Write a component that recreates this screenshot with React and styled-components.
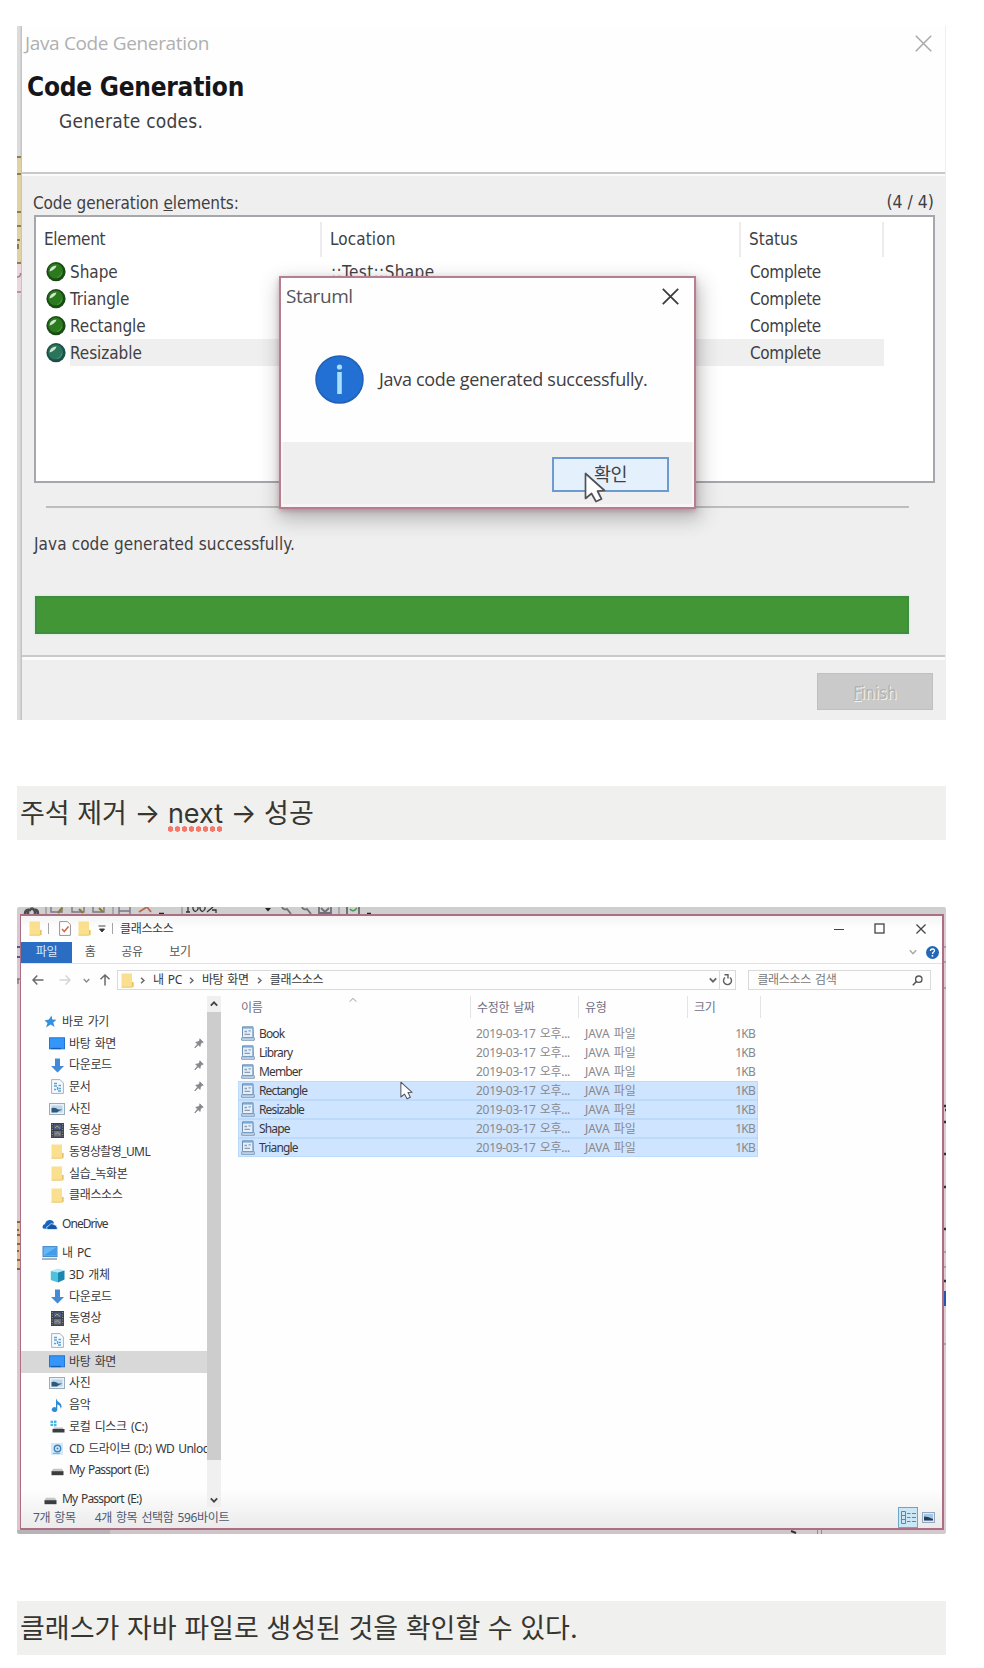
import React from "react";
import styled, { createGlobalStyle, css } from "styled-components";

const Global = createGlobalStyle`
  * { box-sizing: border-box; }
  body { margin: 0; background: #fff; }
  svg { display: block; flex: none; }
`;

const tahoma = `"DejaVu Sans Condensed", "DejaVu Sans", "Noto Sans CJK KR", sans-serif`;
const segoe = `"Open Sans", "Noto Sans", "Noto Sans CJK KR", sans-serif`;
const malgun = `"Noto Sans", "Noto Sans CJK KR", sans-serif`;

const Page = styled.main`
  width: 984px;
  height: 1668px;
  padding: 26px 38px 0 17px;
  overflow: hidden;
`;

const Label = styled.span`
  font-family: ${(p) => p.$font || tahoma};
  font-size: ${(p) => p.$size || 17}px;
  font-weight: ${(p) => p.$weight || 400};
  letter-spacing: ${(p) => p.$ls || 0}px;
  word-spacing: ${(p) => p.$ws || 0}px;
  color: ${(p) => p.$color || "#3f3f44"};
  line-height: 1;
  white-space: pre;
`;

/* ---------- Code generation wizard ---------- */

const Wizard = styled.section`
  position: relative;
  display: flex;
  width: 929px;
  height: 694px;
  overflow: hidden;
`;

const WizardBody = styled.div`
  flex: 1;
  display: flex;
  flex-direction: column;
  background: #efefef;
  border-right: 1px solid #eeeeee;
`;

const WizardHeader = styled.header`
  height: 148px;
  background: #fefefe;
  border-bottom: 2px solid #c9c9c9;
  display: flex;
  flex-direction: column;
`;

const CaptionBar = styled.div`
  height: 35px;
  padding: 0 13px 0 3px;
  display: flex;
  align-items: center;
  justify-content: space-between;
`;

const HeadTitle = styled.div`
  height: 52px;
  padding: 0 0 0 5px;
  display: flex;
  align-items: center;
`;

const HeadNote = styled.div`
  height: 16px;
  padding-left: 37px;
  display: flex;
  align-items: center;
`;

const ListCaption = styled.div`
  height: 41px;
  border-top: 2px solid #fafafa;
  padding: 15px 11px 0 11px;
  display: flex;
  align-items: center;
  justify-content: space-between;
`;

const Table = styled.div`
  height: 268px;
  margin: 0 10px 0 12px;
  border: 2px solid #a6a7ac;
  background: #fff;
  padding: 5px 0 0 0;
`;

const grid = css`
  display: grid;
  grid-template-columns: 286px 419px 143px 1fr;
`;

const TableHead = styled.div`
  ${grid}
  height: 35px;
  margin-bottom: 1px;
`;

const HeadCell = styled.div`
  display: flex;
  align-items: center;
  padding: 0 0 0 8px;
  border-right: ${(p) => (p.$last ? 0 : 2)}px solid #ececec;
`;

const TableRow = styled.div`
  ${grid}
  height: 27px;
`;

const Cell = styled.div`
  display: flex;
  align-items: center;
  padding: 1px 0 0 9px;
  background: ${(p) => (p.$on ? "#efefef" : "transparent")};
`;

const NameCell = styled(Cell)`
  padding: 0 0 0 10px;
  background: ${(p) => (p.$on ? "linear-gradient(90deg, #fff 34px, #efefef 34px)" : "transparent")};
  gap: 4px;
`;

const ElementName = styled(Label)`
  padding-top: 2px;
`;

const Rule = styled.div`
  height: 2px;
  margin: 23px 36px 0 24px;
  background: #bdbdbd;
`;

const StatusLine = styled.div`
  height: 72px;
  padding-left: 12px;
  display: flex;
  align-items: center;
`;

const Progress = styled.div`
  height: 38px;
  margin: 16px 36px 0 13px;
  background: #439635;
  border: 2px solid #3f8c44;
  box-shadow: 0 0 2px 1px #d8f0dc;
`;

const WizardFooter = styled.footer`
  margin-top: 21px;
  flex: 1;
  border-top: 2px solid #c9c9c9;
  box-shadow: inset 0 3px 0 #fbfbfb;
  padding: 16px 12px 0 0;
  display: flex;
  justify-content: flex-end;
`;

const FinishButton = styled.div`
  width: 116px;
  height: 37px;
  background: #cacaca;
  border: 1px solid #c0c0c0;
  display: flex;
  align-items: center;
  justify-content: center;
  padding-top: 3px;
  text-shadow: 1px 1px 0 #f2f2f2;
`;

const Dialog = styled.div`
  position: absolute;
  left: 262px;
  top: 250px;
  width: 417px;
  height: 233px;
  background: #fefefe;
  border: 2px solid #b67f90;
  box-shadow: 2px 8px 18px 2px rgba(60, 60, 60, 0.32), 0 2px 5px rgba(170, 90, 110, 0.4);
  display: flex;
  flex-direction: column;
`;

const DialogTitle = styled.div`
  height: 37px;
  padding: 0 15px 0 5px;
  display: flex;
  align-items: center;
  justify-content: space-between;
`;

const DialogMessage = styled.div`
  flex: 1;
  display: flex;
  align-items: center;
  gap: 15px;
  padding: 1px 0 0 34px;
`;

const DialogFooter = styled.div`
  height: 65px;
  background: #efefef;
  border: solid #fbf4f6;
  border-width: 0 2px 3px;
  display: flex;
  justify-content: flex-end;
  padding: 15px 23px 0 0;
`;

const OkButton = styled.div`
  width: 117px;
  height: 35px;
  background: #e4f0fc;
  border: 2px solid #6c9bd1;
  display: flex;
  align-items: center;
  justify-content: center;
`;

const DialogPointer = styled.div`
  position: absolute;
  left: 303px;
  top: 194px;
`;

const Cross = ({ size = 17, color, w = 1.8 }) => (
  <svg width={size} height={size} viewBox="0 0 17 17" stroke={color} strokeWidth={w} fill="none">
    <path d="M.8.8 16.2 16.2M16.2.8.8 16.2" />
  </svg>
);

const Pointer = ({ width, height }) => (
  <svg width={width} height={height} viewBox="0 0 22 31">
    <path d="M1.5 1.5V26.5L7.5 21.5 12 29.5 17.5 27 13.5 19 20.5 18.5Z" fill="#fff" stroke="#50525a" strokeWidth="1.7" strokeLinejoin="round" />
  </svg>
);

const Ball = ({ teal }) => (
  <svg width="20" height="20" viewBox="0 0 20 20">
    <circle cx="10" cy="9.700" r="9.6" fill={teal ? "#1d4f49" : "#1c4a17"} />
    <circle cx="9.6" cy="9" r="7.4" fill={teal ? "#2b745c" : "#2b7a1d"} />
    <path d="M3.500 9.500Q4 4 10.500 3.500 9.500 7.500 3.500 9.500Z" fill="#cfe8cf" />
    <path d="M11 15.5Q15 14.5 15.8 10.5" stroke={teal ? "#4c9180" : "#479a38"} strokeWidth="1.2" fill="none" />
  </svg>
);

const WizardEdge = () => (
  <svg width="5" height="694" viewBox="0 0 5 694">
    <rect width="5" height="694" fill="#dcdcdc" />
    <rect x="3.5" width="1.5" height="694" fill="#c4c4c6" />
    <rect y="130" width="4" height="106" fill="#dfd3a4" />
    <rect y="237" width="4" height="32" fill="#ead7dc" />
    <g fill="#8b7c5c">
      <rect y="130" width="4" height="2" />
      <rect y="147" width="4" height="2" />
      <rect y="185" width="4" height="2" />
      <rect y="199" width="4" height="2" />
      <rect y="213" width="3" height="2" />
      <rect y="218" width="2" height="5" />
      <rect y="236" width="4" height="2" />
    </g>
    <path d="M0 251Q4 251 3.500 247M0 266H4" stroke="#a5808c" strokeWidth="1.5" fill="none" />
  </svg>
);

const elements = [
  { name: "Shape", location: "::Test::Shape" },
  { name: "Triangle" },
  { name: "Rectangle" },
  { name: "Resizable", selected: true },
];

const CodeWizard = () => (
  <Wizard>
    <WizardEdge />
    <WizardBody>
      <WizardHeader>
        <CaptionBar>
          <Label $font={segoe} $size={19} $ls={-0.35} $color="#b0b0b0">Java Code Generation</Label>
          <Cross color="#a8a8a8" w={1.5} />
        </CaptionBar>
        <HeadTitle>
          <Label $size={26} $weight={700} $ls={-0.25} $color="#16161a">Code Generation</Label>
        </HeadTitle>
        <HeadNote>
          <Label $size={19} $ls={0.22}>Generate codes.</Label>
        </HeadNote>
      </WizardHeader>
      <ListCaption>
        <Label $ls={-0.1}>Code generation <u>e</u>lements:</Label>
        <Label $size={17.5}>(4 / 4)</Label>
      </ListCaption>
      <Table>
        <TableHead>
          <HeadCell><Label $ls={-0.3}>Element</Label></HeadCell>
          <HeadCell><Label $ls={0.1}>Location</Label></HeadCell>
          <HeadCell><Label>Status</Label></HeadCell>
          <HeadCell $last />
        </TableHead>
        {elements.map(({ name, location, selected }) => (
          <TableRow key={name}>
            <NameCell $on={selected}>
              <Ball teal={selected} />
              <ElementName $ls={-0.05}>{name}</ElementName>
            </NameCell>
            <Cell $on={selected}>{location && <Label $ls={0.4}>{location}</Label>}</Cell>
            <Cell $on={selected}><Label $ls={-0.35}>Complete</Label></Cell>
          </TableRow>
        ))}
      </Table>
      <Rule />
      <StatusLine>
        <Label $ls={0.1}>Java code generated successfully.</Label>
      </StatusLine>
      <Progress />
      <WizardFooter>
        <FinishButton><Label $color="#b3b3b3" $ls={0}><u>F</u>inish</Label></FinishButton>
      </WizardFooter>
    </WizardBody>
    <Dialog>
      <DialogTitle>
        <Label $font={segoe} $size={19} $ls={-0.4} $color="#55555a">Staruml</Label>
        <Cross color="#3c3c3e" />
      </DialogTitle>
      <DialogMessage>
        <svg width="49" height="49" viewBox="0 0 49 49">
          <circle cx="24.500" cy="24.500" r="23.500" fill="#2370d5" stroke="#2060b6" strokeWidth="1.500" />
          <circle cx="24.500" cy="12" r="2.600" fill="#a6e0fb" />
          <rect x="22.200" y="17" width="4.600" height="22" fill="#a6e0fb" />
        </svg>
        <Label $font={segoe} $size={18} $ls={-0.3}>Java code generated successfully.</Label>
      </DialogMessage>
      <DialogFooter>
        <OkButton><Label $font={malgun} $size={18.5} $ls={-0.5}>확인</Label></OkButton>
      </DialogFooter>
      <DialogPointer><Pointer width={22} height={31} /></DialogPointer>
    </Dialog>
  </Wizard>
);

/* ---------- Callouts ---------- */

const Callout = styled.p`
  width: 929px;
  height: 54px;
  margin: ${(p) => p.$gap}px 0 0;
  padding: 1px 0 0 3px;
  background: #f0f0ee;
  color: #37352f;
  font-family: "Inter", "Noto Sans CJK KR", sans-serif;
  font-size: 27px;
  line-height: 54px;
  letter-spacing: ${(p) => p.$ls}px;
  white-space: pre;
`;

const Misspelt = styled.span`
  position: relative;
  &::after {
    content: "";
    position: absolute;
    left: -1px;
    right: 0;
    bottom: -2px;
    height: 6px;
    background: radial-gradient(circle, #f2796c 2.5px, transparent 3px) 0 0 / 7.1px 6px round;
  }
`;

/* ---------- File explorer ---------- */

const Desktop = styled.section`
  width: 929px;
  height: 627px;
  margin-top: 67px;
  border-radius: 3px;
  overflow: hidden;
  background: #d9c8ce;
  display: flex;
  flex-direction: column;
`;

const Middle = styled.div`
  height: 616px;
  display: flex;
`;

const Explorer = styled.div`
  width: 924px;
  height: 616px;
  border: solid #ab6e82;
  border-width: 2px 2px 2px 1px;
  background: #fefefe;
  display: flex;
  flex-direction: column;
`;

const TitleBar = styled.div`
  height: 25px;
  background: linear-gradient(#f4f4f4, #fefefe 12px);
  display: flex;
  align-items: center;
  padding: 0 16px 0 8px;
`;

const Space = styled.span`
  flex: none;
  width: ${(p) => p.$w}px;
`;

const Fill = styled.span`
  flex: 1;
`;

const Bar = styled.span`
  width: 1px;
  height: 11px;
  background: #a4a4a4;
`;

const Ribbon = styled.div`
  height: 23px;
  display: flex;
  align-items: center;
  border-bottom: 1px solid #e2e2e2;
  padding-right: 3px;
`;

const FileTab = styled.div`
  width: 51px;
  height: 21px;
  background: #2a6dc3;
  display: flex;
  align-items: center;
  justify-content: center;
`;

const Tab = styled.div`
  width: ${(p) => p.$w}px;
  display: flex;
  justify-content: center;
`;

const AddressRow = styled.div`
  height: 32px;
  padding: 6px 11px 6px 11px;
  display: flex;
  align-items: center;
`;

const AddressBox = styled.div`
  width: 621px;
  height: 20px;
  border: 1px solid #dadada;
  display: flex;
  align-items: center;
  padding-left: 3px;
`;

const Refresh = styled.div`
  width: 16px;
  height: 18px;
  border-left: 1px solid #dadada;
  display: flex;
  align-items: center;
  justify-content: center;
`;

const SearchBox = styled.div`
  width: 183px;
  height: 20px;
  margin-left: 12px;
  border: 1px solid #dadada;
  display: flex;
  align-items: center;
  padding: 0 7px 0 8px;
`;

const Content = styled.div`
  flex: 1;
  min-height: 0;
  display: flex;
`;

const NavPane = styled.nav`
  width: 186px;
  height: 512px;
  padding-top: 15px;
  overflow: hidden;
`;

const NavGroup = styled.div`
  margin-bottom: 7.3px;
`;

const NavRow = styled.div`
  height: 21.7px;
  padding-left: ${(p) => (p.$root ? 21 : 28)}px;
  background: ${(p) => (p.$on ? "#d8d8d8" : "transparent")};
  display: flex;
  align-items: center;
  gap: 4px;
`;

const IconSlot = styled.span`
  flex: none;
  width: 16px;
  display: flex;
  justify-content: center;
`;

const NavText = styled(Label)`
  flex: 1;
`;

const PinSlot = styled.span`
  width: 13px;
`;

const ScrollBar = styled.div`
  width: 14px;
  height: 511px;
  background: #f0f0f0;
  display: flex;
  flex-direction: column;
  align-items: center;
`;

const ScrollButton = styled.div`
  height: ${(p) => p.$h}px;
  display: flex;
  align-items: center;
`;

const Thumb = styled.div`
  width: 14px;
  height: 448px;
  background: #cdcdcd;
`;

const FileArea = styled.div`
  flex: 1;
  padding-left: 17px;
`;

const fileGrid = css`
  display: grid;
  grid-template-columns: 233px 108px 109px 73px;
`;

const FileHead = styled.div`
  ${fileGrid}
  height: 22px;
  margin-bottom: 6px;
`;

const FileHeadCell = styled.div`
  position: relative;
  border-right: 1px solid #e4e4e4;
  padding: 2px 0 0 ${(p) => p.$pad || 6}px;
  display: flex;
  align-items: center;
`;

const SortMark = styled.span`
  position: absolute;
  left: 111px;
  top: 0;
`;

const FileRow = styled.div`
  ${fileGrid}
  position: relative;
  width: 520px;
  height: 19px;
  background: ${(p) => (p.$on ? "#cee4ff" : "transparent")};
  box-shadow: ${(p) => (p.$on ? "inset 0 0 0 0.5px #a9cff6" : "none")};
`;

const FileCell = styled.div`
  display: flex;
  align-items: center;
  gap: 4px;
  padding-left: ${(p) => p.$pad || 6}px;
`;

const FilePointer = styled.span`
  position: absolute;
  left: 162px;
  top: 0;
`;

const SizeCell = styled.div`
  display: flex;
  align-items: center;
  justify-content: flex-end;
  padding-right: 6px;
`;

const StatusBar = styled.div`
  height: 22px;
  display: flex;
  align-items: center;
  padding: 1px 7px 0 12px;
`;

const Lower = styled.div`
  flex: 1;
  min-height: 0;
  display: flex;
  flex-direction: column;
  background: linear-gradient(#fefefe calc(100% - 38px), #ebebeb 100%);
`;

const DetailsView = styled.div`
  width: 20px;
  height: 21px;
  margin-right: 4px;
  background: #cbe6f5;
  border: 1px solid #6ea6c8;
  display: flex;
  align-items: center;
  justify-content: center;
`;

const Chevron = ({ dir = "down", color = "#666", size = 8, w = 1.5 }) => {
  const turn = { down: 0, up: 180, right: -90 }[dir];
  return (
    <svg width={size} height={size} viewBox="0 0 8 8">
      <path d="M.8 2.300 4 5.700 7.200 2.300" fill="none" stroke={color} strokeWidth={w} transform={`rotate(${turn} 4 4)`} />
    </svg>
  );
};

const Crumb = () => <Chevron dir="right" size={7} w={1.6} />;

const Arrow = ({ turn = 0, color = "#6a6a6a" }) => (
  <svg width="12" height="12" viewBox="0 0 12 12">
    <path d="M11.500 6H1M5.300 1.500 1 6 5.300 10.500" fill="none" stroke={color} strokeWidth="1.500" transform={`rotate(${turn} 6 6)`} />
  </svg>
);

const Folder = () => (
  <svg width="13" height="15" viewBox="0 0 13 15">
    <path d="M.5.5H11V9H12.500V14.500H.5Z" fill="#fae08e" />
    <path d="M11 9V14.500H12.500V9ZM.5 13.800H12.500V14.500H.5Z" fill="#e6bf62" />
  </svg>
);

const CheckedDoc = () => (
  <svg width="12" height="15" viewBox="0 0 12 15">
    <path d="M.6.6H8.500L11.400 3.500V14.400H.6Z" fill="#fff" stroke="#949494" />
    <path d="M3 8 5.300 10.500 9.500 5.500" fill="none" stroke="#d0694c" strokeWidth="1.600" />
  </svg>
);

const icons = {
  star: (
    <svg width="13" height="13" viewBox="0 0 13 13">
      <path d="M7.500 .5 8.300 4.500 12.500 4.700 9.300 7.400 10.500 12 6.700 9.600 2 12.500 3.500 8 .5 5.500 4.900 4.600Z" fill="#3291e0" />
    </svg>
  ),
  desktop: (
    <svg width="16" height="13" viewBox="0 0 16 13">
      <rect x=".5" y=".8" width="15" height="11" fill="#3496fb" stroke="#2374d2" />
      <path d="M2 11.500H12" stroke="#1660b0" strokeWidth="1.300" />
    </svg>
  ),
  download: (
    <svg width="15" height="15" viewBox="0 0 15 15">
      <path d="M5 .5H10V8H14L7.500 14.500 1 8H5Z" fill="#4389d5" />
    </svg>
  ),
  doc: (
    <svg width="13" height="15" viewBox="0 0 13 15">
      <path d="M.6.600H9L12.400 4V14.400H.6Z" fill="#f5fafd" stroke="#9fb2c3" />
      <path d="M3 4.500H6M3 7H6M7.500 6.500H10M3 10.500H5M7.500 9.500H10M7 12H10M6.500 8V11" stroke="#5ba3d6" strokeWidth="1.300" />
    </svg>
  ),
  photo: (
    <svg width="16" height="12" viewBox="0 0 16 12">
      <rect x=".5" y=".5" width="15" height="11" fill="#eaf1f7" stroke="#9aabbb" />
      <rect x="2.500" y="2.500" width="11" height="7" fill="#b7d7ef" />
      <path d="M2.500 5Q7 4 9 6.500L13.500 6.500 10 8 8 9.500H2.500Z" fill="#315878" />
    </svg>
  ),
  video: (
    <svg width="13" height="15" viewBox="0 0 13 15">
      <rect width="13" height="15" fill="#3e4249" />
      <rect x="2.800" y="1.500" width="7.400" height="5" fill="#4a5f8c" />
      <rect x="2.800" y="8" width="7.400" height="5.500" fill="#6b747e" />
      <path d="M1.300 1V14M11.700 1V14" stroke="#999ea6" strokeDasharray="1 1.500" />
      <path d="M4 5 6 3 9 5.500M4 11 7 9.500 9 12" stroke="#b59e66" fill="none" />
    </svg>
  ),
  folder: <Folder />,
  cloud: (
    <svg width="16" height="11" viewBox="0 0 16 11">
      <path d="M1 9.500Q-.5 6 3 5 4 1 8 1 11 1 12 4L6 10Z" fill="#1a66bd" />
      <path d="M5 10.500Q3.500 7.500 7 6.500 9 3 12 5.500 15.500 6 15.500 10.500Z" fill="#1357a8" stroke="#fff" strokeWidth=".7" />
    </svg>
  ),
  pc: (
    <svg width="16" height="14" viewBox="0 0 16 14">
      <rect x="1" y=".6" width="14" height="10" fill="#66b5f5" stroke="#3f88c8" />
      <path d="M2 9.500 14 1.500V9.500Z" fill="#429de9" />
      <path d="M0 13H15" stroke="#788a9b" strokeWidth="1.300" />
    </svg>
  ),
  cube: (
    <svg width="15" height="15" viewBox="0 0 15 15">
      <path d="M.8 3 8 .5 14.500 2.500 8 4.500Z" fill="#b4eaf5" />
      <path d="M.8 3 8 4.500V14.500L.8 12Z" fill="#4dc2dc" />
      <path d="M8 4.500 14.500 2.500V11.500L8 14.500Z" fill="#1b86b0" />
    </svg>
  ),
  music: (
    <svg width="12" height="15" viewBox="0 0 12 15">
      <path d="M5 .5Q6 3.500 9 5 12 8 9.500 11 10 7.500 6.300 6.500V11.500A2.800 2.500 0 1 1 5 9.500Z" fill="#2f8ad6" />
    </svg>
  ),
  disk: (
    <svg width="15" height="13" viewBox="0 0 15 13">
      <path d="M.5.8H3V3H.5ZM3.800.5H6.500V3H3.800ZM.5 3.800H3V6H.5ZM3.800 3.800H6.500V6.300H3.800Z" fill="#45b5e9" />
      <path d="M4 7.500H12.500L14 10H2.500Z" fill="#b8babd" />
      <rect x="2.500" y="9" width="12" height="3.500" fill="#3c3e40" />
    </svg>
  ),
  cd: (
    <svg width="12" height="12" viewBox="0 0 12 12">
      <rect width="12" height="12" fill="#d5e8f7" />
      <circle cx="6.500" cy="5.500" r="3.200" fill="none" stroke="#3e84bc" strokeWidth="1.400" />
      <circle cx="6.500" cy="5.500" r="1" fill="#3e84bc" />
      <path d="M2 10.300H9" stroke="#6ea4cd" />
    </svg>
  ),
  drive: (
    <svg width="13" height="12" viewBox="0 0 13 12">
      <path d="M2 4.800H11L12.500 7.500H.5Z" fill="#c4c6c8" />
      <rect x=".5" y="7.200" width="12" height="4" fill="#3b3d3f" />
    </svg>
  ),
};

const Pin = () => (
  <svg width="10" height="11" viewBox="0 0 10 11">
    <path d="M5.800.8 9.300 4.200 8 4.400 6.500 6 6 8.500 4.300 6.800 1 10 .8 9.600 3.500 6 1.700 4.200 4.200 3.800 5.700 2.200Z" fill="#85888d" stroke="#85888d" strokeWidth=".7" />
  </svg>
);

const JavaFile = () => (
  <svg width="14" height="15" viewBox="0 0 14 15">
    <path d="M1.500 .8H12L12.500 10.500 13.300 12.500V14.200H.7V12.500L1.500 10.500Z" fill="#e3effb" stroke="#6f8fb2" />
    <path d="M2 1.800H12" stroke="#79a9d8" strokeWidth="1.600" />
    <path d="M11.800 2V11" stroke="#8db0d3" strokeWidth="1.200" />
    <path d="M3.500 5.500H6M7.500 4.800H9.800M3.500 8.300H9" stroke="#8f9dae" strokeWidth="1.300" />
    <path d="M1.500 11.800H12.500" stroke="#6288b2" strokeWidth="1.200" />
  </svg>
);

const ToolbarBehind = () => (
  <svg width="929" height="7" viewBox="0 0 929 7">
    <rect width="929" height="7" fill="#d0cfd0" />
    <g fill="none" stroke="#4b4b50" strokeWidth="1.400">
      <path d="M8 7Q8 2 13 3 15 0 17 3 21 2 21 7M11 7V4M18 7V4" strokeWidth="2.600" />
      <path d="M29 0V7M96 0V7M165 0V7M322 0V7" stroke="#999" />
      <path d="M34 0V5H45V0M55 0V5H67V0M76 0V5H87V0M102 0V7M113 0V7M102 4H113" stroke="#787782" />
      <path d="M41 6 45 1M62 2 66 6M82 1 86 5" stroke="#8b7c35" strokeWidth="2.200" />
      <path d="M122 5 130 0 134 5" stroke="#bc6b50" strokeWidth="2" />
      <path d="M142 6.500H147M350 6.500H354" stroke="#222" />
      <path d="M265 0A3.500 3.500 0 0 0 270 2L274 7M285 0A3.500 3.500 0 0 0 290 2L294 7M302 0V6H314V0M304 1 308 5 312 1" stroke="#707178" strokeWidth="1.800" />
      <path d="M330 0V7M342 0V7" />
      <path d="M333 2Q336 6 340 1" stroke="#499b52" />
    </g>
    <path d="M171 0V5M169 5H173M176 0V2Q178 7 181 2V0M183 0V2Q185 7 188 2V0M190 5 196 0M195 3H199V6" stroke="#333" fill="none" strokeWidth="1.300" />
    <path d="M248 1H254L251 4.500Z" fill="#222" />
  </svg>
);

const LeftEdge = () => (
  <svg width="3" height="616" viewBox="0 0 3 616">
    <rect width="3" height="616" fill="#dbc7d0" />
    <path d="M0 33H3M0 43H3" stroke="#4a57a1" strokeWidth="2" />
    <rect y="308" width="3" height="48" fill="#e1bf91" />
    <path d="M0 308H3M0 316H2M0 321H3M0 330H3M0 337H2M0 346H3M0 355H3" stroke="#62452e" strokeWidth="1.500" />
    <path d="M0 65H3M1 65V70" stroke="#6e5565" />
  </svg>
);

const RightEdge = () => (
  <svg width="2" height="616" viewBox="0 0 2 616">
    <rect width="2" height="616" fill="#ddcbd1" />
    <path d="M0 33H3M0 48H3M0 74H3M0 338H3M0 353H3M0 430H3" stroke="#8e707b" />
    <path d="M0 192H3M1 196H3M0 208H3M0 240H3M0 273H3M0 315H3M0 367H3" stroke="#392d35" strokeWidth="2.500" />
    <rect y="377" width="3" height="15" fill="#2257b4" />
  </svg>
);

const BottomBehind = () => (
  <svg width="929" height="4" viewBox="0 0 929 4">
    <rect width="929" height="4" fill="#d5c9cd" />
    <rect width="93" height="4" fill="#b8b3b6" />
    <rect x="93" width="680" height="4" fill="#cfc5c9" />
    <path d="M774 1 779 3" stroke="#333" strokeWidth="2" />
    <path d="M800.500 0V4M804.500 0V4" stroke="#968b90" />
  </svg>
);

const quick = [
  { icon: "desktop", text: "바탕 화면", pinned: true },
  { icon: "download", text: "다운로드", pinned: true },
  { icon: "doc", text: "문서", pinned: true },
  { icon: "photo", text: "사진", pinned: true },
  { icon: "video", text: "동영상" },
  { icon: "folder", text: "동영상촬영_UML", ls: -0.6 },
  { icon: "folder", text: "실습_녹화본" },
  { icon: "folder", text: "클래스소스" },
];

const thisPc = [
  { icon: "cube", text: "3D 개체" },
  { icon: "download", text: "다운로드" },
  { icon: "video", text: "동영상" },
  { icon: "doc", text: "문서" },
  { icon: "desktop", text: "바탕 화면", on: true },
  { icon: "photo", text: "사진" },
  { icon: "music", text: "음악" },
  { icon: "disk", text: "로컬 디스크 (C:)" },
  { icon: "cd", text: "CD 드라이브 (D:) WD Unloc", ls: -0.55 },
  { icon: "drive", text: "My Passport (E:)", ls: -0.85 },
];

const NavItem = ({ icon, text, root, on, pinned, ls = -0.35 }) => (
  <NavRow $root={root} $on={on}>
    <IconSlot>{icons[icon]}</IconSlot>
    <NavText $font={malgun} $size={12} $ls={ls} $ws={1.5} $color="#38383b">{text}</NavText>
    {pinned && <PinSlot><Pin /></PinSlot>}
  </NavRow>
);

const files = ["Book", "Library", "Member", "Rectangle", "Resizable", "Shape", "Triangle"];

const T = ({ children, color = "#38383b", size = 12, ls = -0.35 }) => (
  <Label $font={malgun} $size={size} $ls={ls} $ws={1.3} $color={color}>{children}</Label>
);

const FileExplorer = () => (
  <Desktop>
    <ToolbarBehind />
    <Middle>
      <LeftEdge />
      <Explorer>
        <TitleBar>
          <Folder /><Space $w={6} /><Bar /><Space $w={10} />
          <CheckedDoc /><Space $w={7} /><Folder /><Space $w={7} />
          <svg width="8" height="8" viewBox="0 0 8 8"><path d="M.5 1H7.500M1.500 4H6.500L4 7Z" fill="#333" stroke="#333" strokeWidth=".9" /></svg>
          <Space $w={6} /><Bar /><Space $w={7} />
          <T>클래스소스</T>
          <Fill />
          <svg width="10" height="10" viewBox="0 0 10 10"><path d="M0 5.500H10" stroke="#444" strokeWidth="1.200" /></svg>
          <Space $w={30} />
          <svg width="11" height="11" viewBox="0 0 11 11"><rect x="1" y="1" width="9" height="9" fill="none" stroke="#444" strokeWidth="1.300" /></svg>
          <Space $w={31} />
          <Cross size={10} color="#444" w={2.200} />
        </TitleBar>
        <Ribbon>
          <FileTab><T color="#d9e9ff">파일</T></FileTab>
          <Tab $w={36}><T color="#555">홈</T></Tab>
          <Tab $w={48}><T color="#555">공유</T></Tab>
          <Tab $w={48}><T color="#555">보기</T></Tab>
          <Fill />
          <Chevron color="#aaa" /><Space $w={9} />
          <svg width="13" height="13" viewBox="0 0 13 13">
            <circle cx="6.500" cy="6.500" r="6.500" fill="#2467b5" />
            <path d="M4.500 5Q4.500 3 6.500 3 8.600 3 8.500 4.800 8.400 5.800 7 6.500L6.500 8" fill="none" stroke="#fff" strokeWidth="1.300" />
            <circle cx="6.400" cy="9.800" r=".9" fill="#fff" />
          </svg>
        </Ribbon>
        <AddressRow>
          <Arrow /><Space $w={15} /><Arrow turn={180} color="#d5d5d5" /><Space $w={12} />
          <Chevron color="#888" size={7} /><Space $w={9} /><Arrow turn={90} /><Space $w={6} />
          <AddressBox>
            <Folder /><Space $w={5} />
            <Crumb /><Space $w={7} /><T>내 PC</T><Space $w={6} />
            <Crumb /><Space $w={7} /><T>바탕 화면</T><Space $w={7} />
            <Crumb /><Space $w={7} /><T>클래스소스</T>
            <Fill />
            <Chevron color="#666" w={1.800} /><Space $w={2} />
            <Refresh>
              <svg width="11" height="12" viewBox="0 0 11 12"><path d="M3 3.500A4 4 0 1 0 8 3.500M2.500.8H6V4.500" fill="none" stroke="#5f5f5f" strokeWidth="1.400" /></svg>
            </Refresh>
          </AddressBox>
          <SearchBox>
            <T color="#78787a">클래스소스 검색</T>
            <Fill />
            <svg width="11" height="11" viewBox="0 0 11 11"><circle cx="6.800" cy="4.200" r="3.200" fill="none" stroke="#555" strokeWidth="1.300" /><path d="M4.500 6.500.8 10.200" stroke="#555" strokeWidth="1.600" /></svg>
          </SearchBox>
        </AddressRow>
        <Lower>
          <Content>
            <NavPane>
              <NavGroup>
                <NavItem root icon="star" text="바로 가기" />
                {quick.map((item) => <NavItem key={item.text} {...item} />)}
              </NavGroup>
              <NavGroup><NavItem root icon="cloud" text="OneDrive" ls={-0.95} /></NavGroup>
              <NavGroup>
                <NavItem root icon="pc" text="내 PC" />
                {thisPc.map((item) => <NavItem key={item.text} {...item} />)}
              </NavGroup>
              <NavItem root icon="drive" text="My Passport (E:)" ls={-0.85} />
            </NavPane>
            <ScrollBar>
              <ScrollButton $h={16}><Chevron dir="up" color="#444" w={1.800} /></ScrollButton>
              <Thumb />
              <Fill />
              <ScrollButton $h={14}><Chevron color="#444" w={1.800} /></ScrollButton>
            </ScrollBar>
            <FileArea>
              <FileHead>
                <FileHeadCell $pad={3}>
                  <T color="#716f83">이름</T>
                  <SortMark><Chevron dir="up" color="#999" w={1} /></SortMark>
                </FileHeadCell>
                <FileHeadCell><T color="#716f83">수정한 날짜</T></FileHeadCell>
                <FileHeadCell><T color="#716f83">유형</T></FileHeadCell>
                <FileHeadCell><T color="#716f83">크기</T></FileHeadCell>
              </FileHead>
              {files.map((name, i) => (
                <FileRow key={name} $on={i > 2}>
                  <FileCell $pad={3}><JavaFile /><T ls={-0.85}>{name}</T></FileCell>
                  <FileCell $pad={5}><T color="#88888d" ls={-0.3}>2019-03-17 오후...</T></FileCell>
                  <FileCell $pad={6}><T color="#88888d" ls={-0.1}>JAVA 파일</T></FileCell>
                  <SizeCell><T color="#88888d" ls={-0.8}>1KB</T></SizeCell>
                  {i === 3 && <FilePointer><Pointer width={13} height={19} /></FilePointer>}
                </FileRow>
              ))}
            </FileArea>
          </Content>
          <StatusBar>
            <T color="#4e5a70">7개 항목</T><Space $w={19} /><T color="#4e5a70">4개 항목 선택함 596바이트</T>
            <Fill />
            <DetailsView>
              <svg width="15" height="13" viewBox="0 0 15 13"><path d="M.5.500H4.500V12.500H.5ZM.5 4.500H4.500M.5 8.500H4.500M6 2.500H9.500M11 2.500H15M6 6.500H9.500M11 6.500H15M6 10.500H9.500M11 10.500H15" stroke="#72818c" fill="none" /></svg>
            </DetailsView>
            <svg width="13" height="11" viewBox="0 0 13 11"><rect x=".5" y=".5" width="12" height="10" fill="#e2ebf4" stroke="#96a6bb" /><rect x="2" y="2" width="9" height="6.500" fill="#9fc8e8" /><path d="M2 4.500 6 5 11 7V8.500H2Z" fill="#253f5b" /></svg>
          </StatusBar>
        </Lower>
      </Explorer>
      <RightEdge />
    </Middle>
    <BottomBehind />
  </Desktop>
);

export default function App() {
  return (
    <Page>
      <Global />
      <CodeWizard />
      <Callout $gap={66} $ls={0}>주석 제거 → <Misspelt>next</Misspelt> → 성공</Callout>
      <FileExplorer />
      <Callout $gap={67} $ls={0}>클래스가 자바 파일로 생성된 것을 확인할 수 있다.</Callout>
    </Page>
  );
}
